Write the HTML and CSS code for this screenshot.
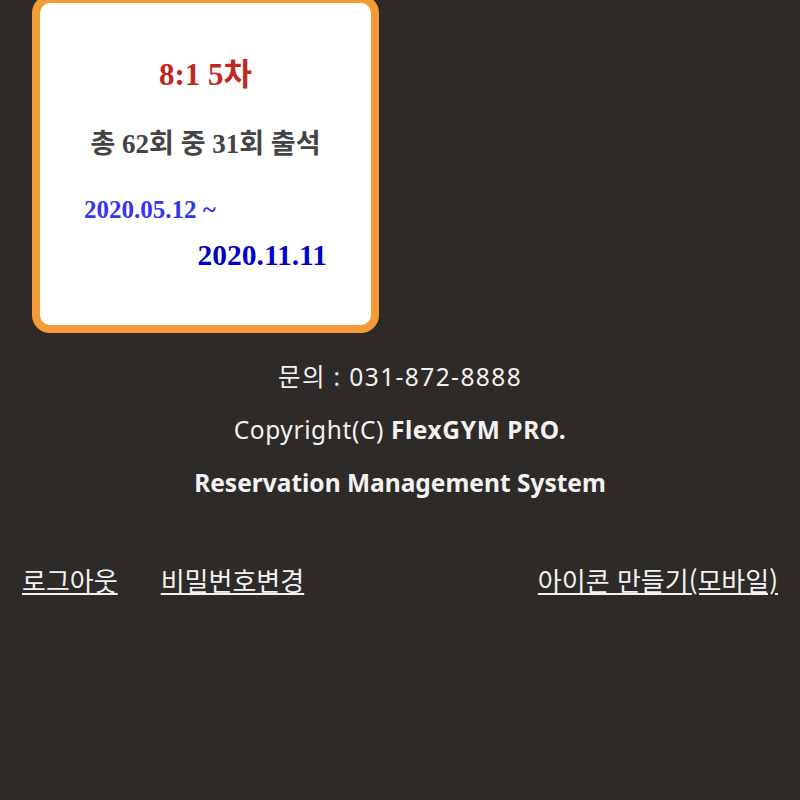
FILE: index.html
```html
<!DOCTYPE html>
<html lang="ko">

<head>
    <meta charset="UTF-8">
    <meta name="viewport" content="width=device-width, initial-scale=1.0">
    <title>FlexGYM PRO</title>
    <link rel="stylesheet" href="styles.css">
</head>

<body>
    <div class="ticket-card">
        <div class="ticket-name">8:1 5차</div>
        <div class="ticket-count">총 62회 중 31회 출석</div>
        <div class="ticket-start">2020.05.12 ~</div>
        <div class="ticket-end">2020.11.11</div>
    </div>

    <div class="footer">
        <p class="contact">문의 : 031-872-8888</p>
        <p class="copyright">Copyright(C) <b>FlexGYM PRO.</b></p>
        <p><b>Reservation Management System</b></p>
    </div>

    <div class="menu-links">
        <div class="menu-left">
            <a href="#">로그아웃</a>
            <a href="#">비밀번호변경</a>
        </div>
        <a href="#">아이콘 만들기(모바일)</a>
    </div>
</body>

</html>
```

FILE: styles.css
```css
:root {
    --bg-color: #2e2a27;
    --card-border: #f39c35;
    --text-light: #f2f2f2;
}

body {
    margin: 0;
    background-color: var(--bg-color);
    font-family: "Noto Sans", "Noto Sans CJK KR", sans-serif;
    color: var(--text-light);
    overflow: hidden;
}

/* 수강권 카드 */
.ticket-card {
    box-sizing: border-box;
    width: 347px;
    height: 338px;
    margin: -5px 0 0 32px;
    padding: 54px 44px 0;
    background-color: #fff;
    border: 8px solid var(--card-border);
    border-radius: 18px;
    font-family: "Liberation Serif", "Noto Sans CJK KR", serif;
    font-weight: bold;
}

.ticket-name {
    font-size: 31px;
    line-height: 36px;
    color: #c0281f;
    text-align: center;
}

.ticket-count {
    margin-top: 36px;
    font-size: 27px;
    line-height: 31px;
    color: #444;
    text-align: center;
}

.ticket-start {
    margin-top: 35px;
    font-size: 25px;
    line-height: 30px;
    color: #3535f0;
}

.ticket-end {
    margin-top: 13px;
    font-size: 29.5px;
    line-height: 34px;
    color: #0000c8;
    text-align: right;
}

.footer {
    margin-top: 17px;
    text-align: center;
    font-size: 24.5px;
}

.footer p {
    margin: 0;
    line-height: 53px;
}

/* 숫자 폭이 넓은 원본 글꼴에 맞춤 */
.footer .contact {
    letter-spacing: 1.4px;
}

.footer .copyright {
    letter-spacing: 0.6px;
}

.menu-links {
    display: flex;
    justify-content: space-between;
    margin-top: 44px;
    padding: 0 22px;
    font-family: "Noto Sans CJK KR", sans-serif;
    font-size: 26px;
    line-height: 53px;
}

.menu-left {
    display: flex;
    gap: 43px;
}

.menu-links a {
    color: var(--text-light);
}
```
